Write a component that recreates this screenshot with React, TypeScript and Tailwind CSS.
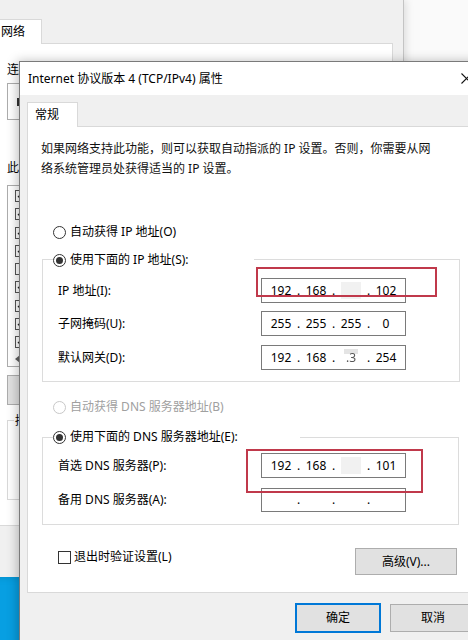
import React, { Fragment } from "react";

function Radio({ checked = false, disabled = false }: { checked?: boolean; disabled?: boolean }) {
  return (
    <span
      className={`flex h-[13px] w-[13px] shrink-0 items-center justify-center rounded-full border bg-white ${
        disabled ? "border-[#c8c8c8]" : "border-[#333333]"
      }`}
    >
      {checked && <span className="h-[7px] w-[7px] rounded-full bg-[#333333]" />}
    </span>
  );
}

function IpField({ segs }: { segs: React.ReactNode[] }) {
  return (
    <div className="flex h-full w-[145px] items-center border border-[#7a7a7a] bg-white pl-[4px] text-[12px] leading-[16px] text-black">
      {segs.map((s, i) => (
        <Fragment key={i}>
          {i > 0 && <span className="w-[5px] text-center">.</span>}
          <span className="flex w-[30px] justify-center">{s}</span>
        </Fragment>
      ))}
    </div>
  );
}

function Blur() {
  return <span className="flex h-[17px] w-[20px] items-center justify-center bg-[#f1f1f1] blur-[0.6px]" />;
}

function ListItem({ checked }: { checked: boolean }) {
  return (
    <div className="flex h-[18.3px] items-center pl-[7px]">
      <span className="flex h-[12px] w-[12px] items-center justify-center border border-[#555] bg-white">
        {checked && (
          <svg width="8" height="8" viewBox="0 0 8 8">
            <path d="M1 4 L3 6 L7 1" stroke="#222" strokeWidth="1.4" fill="none" />
          </svg>
        )}
      </span>
    </div>
  );
}

export default function App() {
  return (
    <div className="relative h-[640px] w-[468px] overflow-hidden bg-[#fafafa] font-['Noto_Sans','Noto_Sans_CJK_SC',sans-serif] text-[12px] leading-[16px] text-black">
      {/* desktop blue */}
      <div className="absolute left-0 top-[577px] h-[63px] w-[60px] bg-[#079fe2]" />

      {/* background window */}
      <div className="absolute left-[-20px] top-0 flex h-[577px] w-[424px] flex-col border-r border-[#c4c4c4] bg-[#f0f0f0] px-[8px] pt-[19px] shadow-[2px_0_8px_rgba(0,0,0,0.12)]">
        <div className="flex">
          <div className="relative z-10 h-[25px] w-[54px] border border-b-0 border-[#d9d9d9] bg-white pl-[12px] pt-[4px]">网络</div>
        </div>
        <div className="-mt-px flex h-[483px] w-[405px] flex-col border border-[#d9d9d9] bg-white pl-[18px] pt-[18px]">
          <div>连接时使用:</div>
          <div className="mt-[5px] flex h-[37px] w-[350px] items-center border border-[#adadad] bg-white pl-[9px]">
            <span className="h-[8px] w-[4px] bg-[#333]" />
          </div>
          <div className="mt-[40px]">此连接使用下列项目(O):</div>
          <div className="mt-[9px] flex h-[182px] w-[350px] flex-col border border-[#adadad] bg-white pt-[1px]">
            <ListItem checked />
            <ListItem checked />
            <ListItem checked />
            <ListItem checked />
            <ListItem checked={false} />
            <ListItem checked />
            <ListItem checked />
            <ListItem checked />
            <ListItem checked />
            <div className="flex h-[15px] items-center pl-[7px]">
              <svg width="6" height="8" viewBox="0 0 6 8">
                <path d="M5 0 L0 4 L5 8 Z" fill="#606060" />
              </svg>
            </div>
          </div>
          <div className="mt-[8px] h-[30px] w-[80px] border border-[#adadad] bg-[#e1e1e1]" />
          <div className="mt-[15px] h-[80px] w-[350px] border border-[#d9d9d9]">
            <div className="-mt-[8px] ml-[6px] w-fit bg-white px-[1px]">描述</div>
          </div>
        </div>
      </div>

      {/* dialog */}
      <div className="absolute left-[19px] top-[61px] flex h-[600px] w-[472px] flex-col border-l border-t border-[#7a7a7a] bg-[#f0f0f0] shadow-[-2px_0_10px_rgba(0,0,0,0.25)]">
        {/* title bar */}
        <div className="relative flex h-[33px] shrink-0 items-center bg-white pl-[8px]">
          <span>Internet 协议版本 4 (TCP/IPv4) 属性</span>
          <svg className="absolute left-[441px] top-[11px]" width="11" height="11" viewBox="0 0 11 11">
            <path d="M0.5 0.5 L10.5 10.5 M10.5 0.5 L0.5 10.5" stroke="#111" strokeWidth="1.1" />
          </svg>
        </div>

        {/* body */}
        <div className="flex flex-col px-[7px] pt-[7px]">
          <div className="flex">
            <div className="relative z-10 h-[25px] w-[51px] border border-b-0 border-[#d9d9d9] bg-white pl-[7px] pt-[4px]">常规</div>
          </div>
          <div className="-mt-px flex h-[467px] flex-col border border-[#d9d9d9] bg-white pt-[12px]">
            <p className="pl-[13px] leading-[20px] text-[#111]">
              如果网络支持此功能，则可以获取自动指派的 IP 设置。否则，你需要从网
              <br />
              络系统管理员处获得适当的 IP 设置。
            </p>

            {/* radio auto ip */}
            <div className="ml-[25px] mt-[45px] flex h-[16px] items-center gap-[4px]">
              <Radio />
              <span>自动获得 IP 地址(O)</span>
            </div>

            {/* group 1 */}
            <div className="relative ml-[14px] mt-[19px] flex h-[123px] w-[418px] flex-col border border-[#dcdcdc] pb-[11px]">
              <div className="-mt-[9px] ml-[10px] flex h-[18px] w-[201px] items-center gap-[4px] bg-white">
                <Radio checked />
                <span>使用下面的 IP 地址(S):</span>
              </div>
              <div className="mt-[9px] flex h-[25px] items-center pl-[15px]">
                <span className="w-[203px] shrink-0">IP 地址(I):</span>
                <IpField segs={["192", "168", <Blur key="b" />, "102"]} />
              </div>
              <div className="mt-[8px] flex h-[25px] items-center pl-[15px]">
                <span className="w-[203px] shrink-0">子网掩码(U):</span>
                <IpField segs={["255", "255", "255", "0"]} />
              </div>
              <div className="mt-[9px] flex h-[25px] items-center pl-[15px]">
                <span className="w-[203px] shrink-0">默认网关(D):</span>
                <IpField
                  segs={[
                    "192",
                    "168",
                    <span key="c" className="flex h-[17px] w-[20px] flex-col items-center">
                      <span className="h-[5px] w-[14px] bg-[#e4e4e4] blur-[0.6px]" />
                      <span className="-mt-[4px] text-[#555] blur-[0.4px]">.3</span>
                    </span>,
                    "254",
                  ]}
                />
              </div>
              <div className="pointer-events-none absolute left-[213px] top-[7px] h-[30px] w-[181px] border-2 border-[#c0394b]" />
            </div>

            {/* radio auto dns */}
            <div className="ml-[25px] mt-[17px] flex h-[16px] items-center gap-[4px] text-[#a0a0a0]">
              <Radio disabled />
              <span>自动获得 DNS 服务器地址(B)</span>
            </div>

            {/* group 2 */}
            <div className="relative ml-[14px] mt-[22px] flex h-[88px] w-[417px] flex-col border border-[#dcdcdc] pb-[11px]">
              <div className="-mt-[10px] ml-[10px] flex h-[18px] w-[247px] items-center gap-[4px] bg-white">
                <Radio checked />
                <span>使用下面的 DNS 服务器地址(E):</span>
              </div>
              <div className="mt-[7px] flex h-[25px] items-center pl-[15px]">
                <span className="w-[203px] shrink-0">首选 DNS 服务器(P):</span>
                <IpField segs={["192", "168", <Blur key="b2" />, "101"]} />
              </div>
              <div className="mt-[10px] flex h-[24px] items-center pl-[15px]">
                <span className="w-[203px] shrink-0">备用 DNS 服务器(A):</span>
                <IpField segs={["", "", "", ""]} />
              </div>
              <div className="pointer-events-none absolute left-[203px] top-[11px] h-[44px] w-[177px] border-2 border-[#c0394b]" />
            </div>

            {/* checkbox + advanced */}
            <div className="ml-[30px] mt-[23px] flex w-[399px] items-start justify-between">
              <div className="mt-[1px] flex items-center gap-[3px]">
                <span className="h-[13px] w-[13px] border border-[#333] bg-white" />
                <span>退出时验证设置(L)</span>
              </div>
              <button className="flex h-[27px] w-[102px] items-center justify-center border border-[#adadad] bg-[#e1e1e1]">
                高级(V)...
              </button>
            </div>
          </div>

          {/* ok / cancel */}
          <div className="mt-[10px] flex justify-end gap-[9px] pr-[8px]">
            <button className="flex h-[30px] w-[86px] items-center justify-center border-2 border-[#0078d7] bg-[#e1e1e1]">
              确定
            </button>
            <button className="mt-px flex h-[28px] w-[86px] items-center justify-center border border-[#adadad] bg-[#e1e1e1]">
              取消
            </button>
          </div>
        </div>
      </div>
    </div>
  );
}
